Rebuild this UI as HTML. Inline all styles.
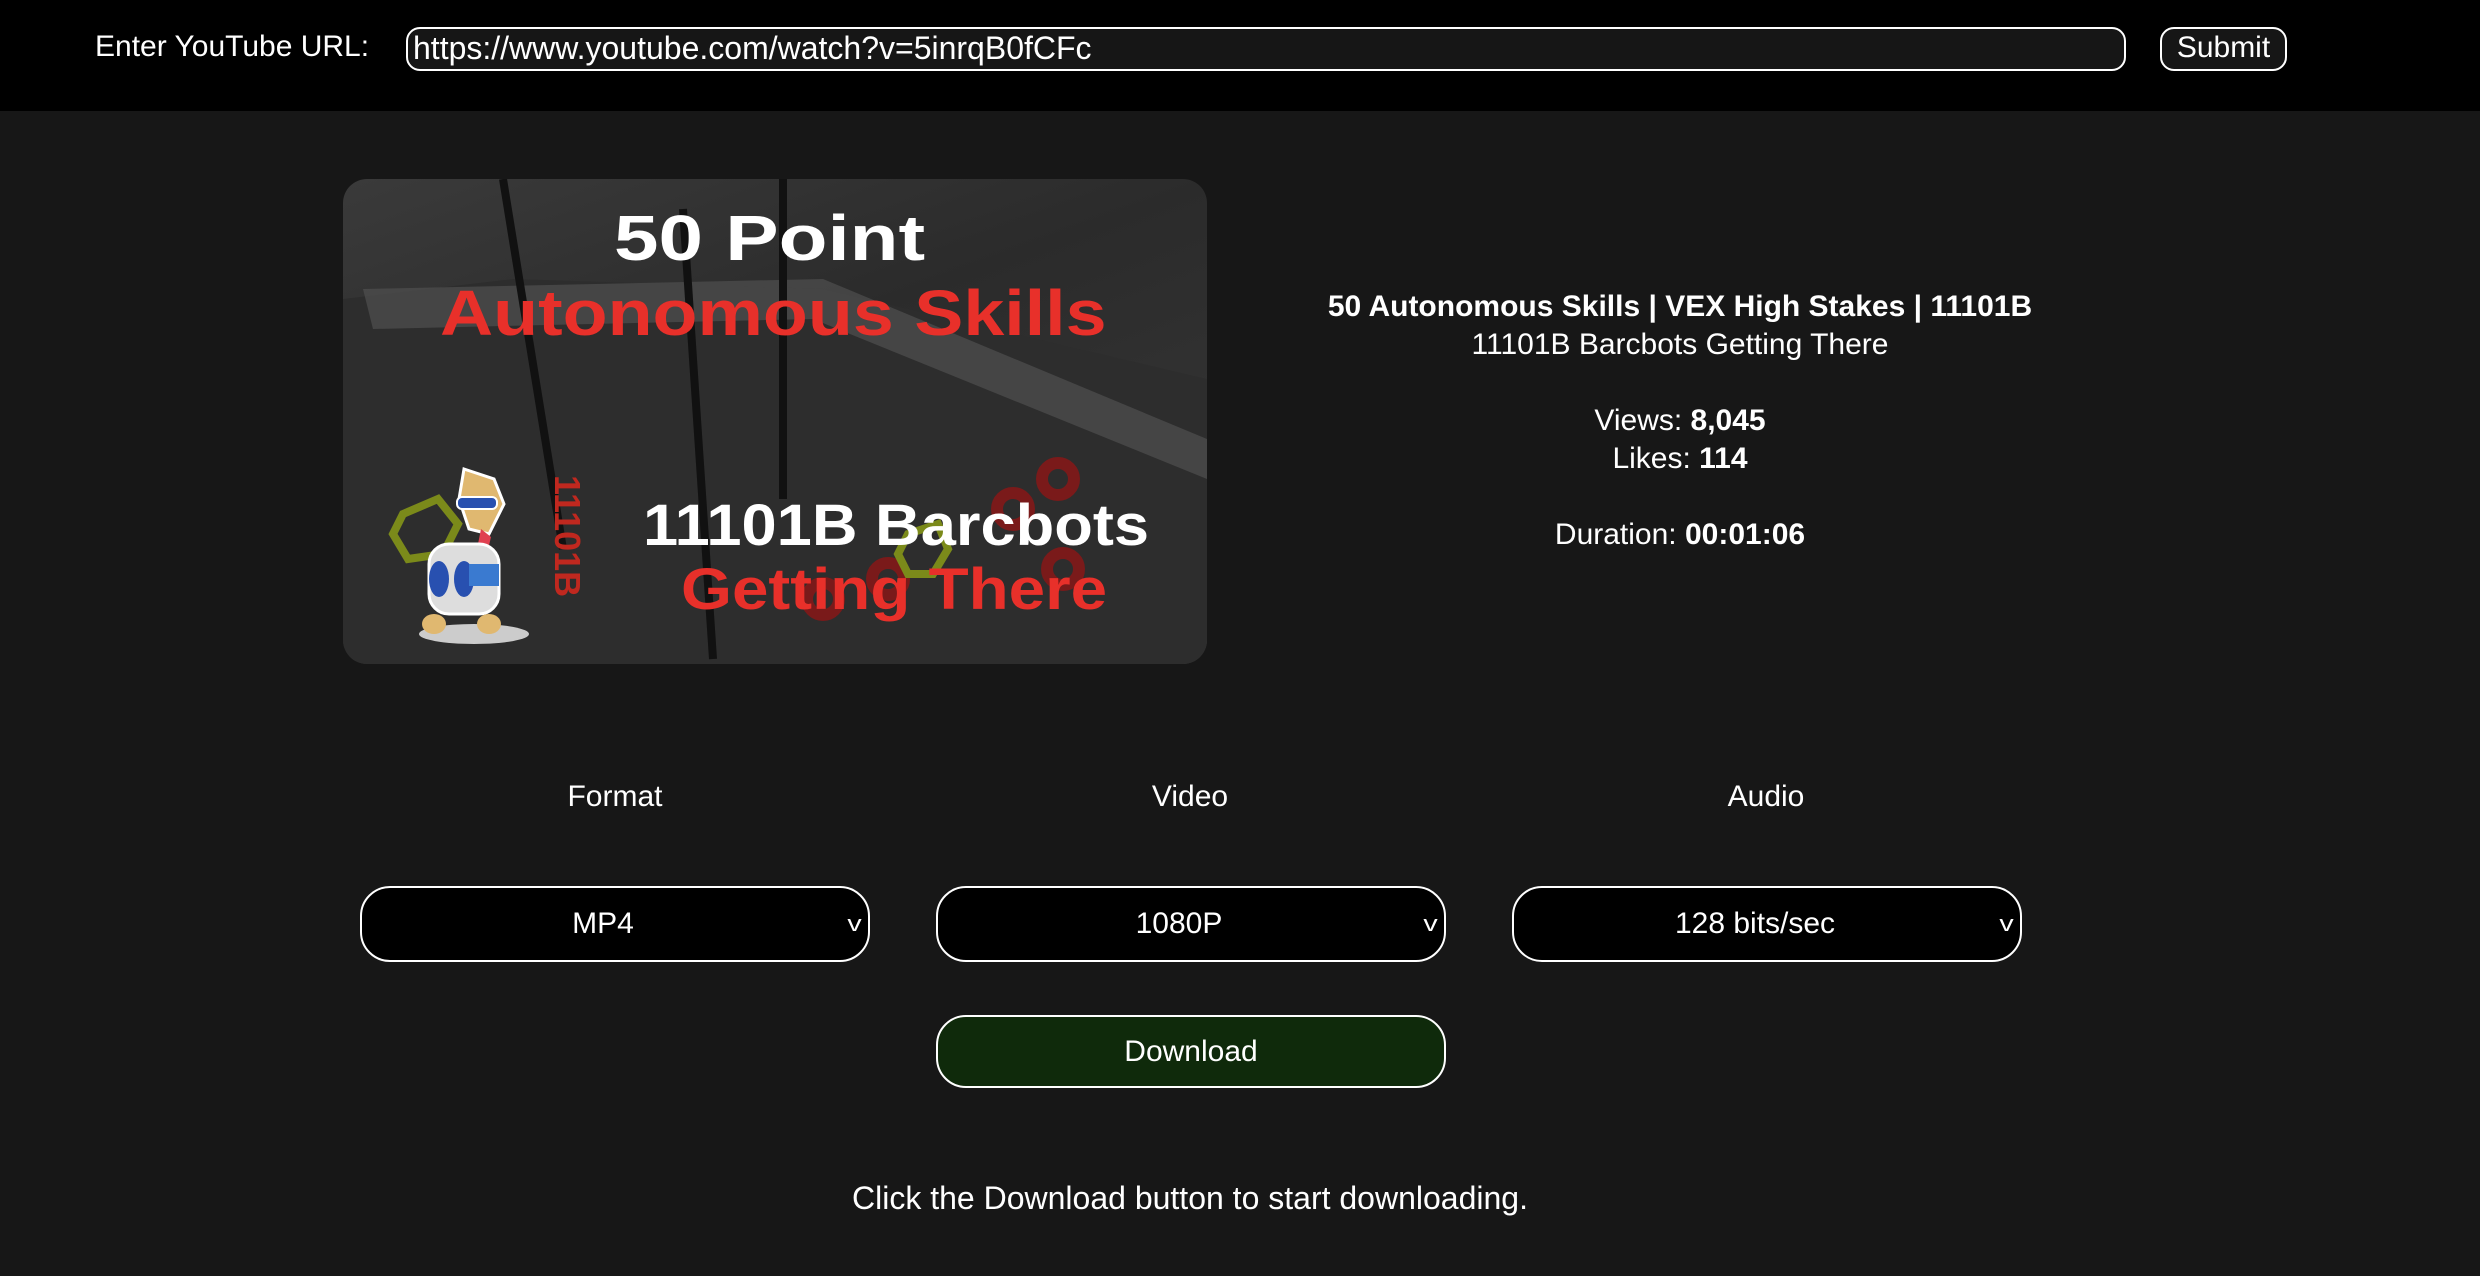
<!DOCTYPE html>
<html><head><meta charset="utf-8"><style>
*{margin:0;padding:0;box-sizing:border-box}
body{width:2480px;height:1276px;background:#171717;font-family:"Liberation Sans",sans-serif;color:#fff;position:relative;overflow:hidden}
.hdr{position:absolute;left:0;top:0;width:2480px;height:111px;background:#000}
.abs{position:absolute}
.lbl{left:95px;top:30px;font-size:30px;line-height:34px}
.inp{left:406px;top:27px;width:1720px;height:44px;border:2px solid #fff;border-radius:14px;background:#161616;font-size:32px;line-height:38px;padding-left:5px}
.sub{left:2160px;top:27px;width:127px;height:44px;border:2px solid #fff;border-radius:14px;background:#161616;font-size:30px;line-height:38px;text-align:center}
.thumb{left:343px;top:179px;width:864px;height:485px;border-radius:24px;overflow:hidden;background:linear-gradient(160deg,#3a3a3a 0%,#2b2b2b 40%,#323232 70%,#3d3d3d 100%)}
.t{position:absolute;font-weight:bold;white-space:nowrap;transform-origin:0 0}
.info{left:1180px;width:1000px;text-align:center;font-size:30px;line-height:38px}
.cl{top:780px;font-size:30px;width:300px;text-align:center}
.sel{top:886px;width:510px;height:76px;border:2px solid #fff;border-radius:30px;background:#000;font-size:30px;line-height:72px;text-align:center;padding-right:24px}
.sel span.c{position:absolute;right:8px;top:0;font-size:22px;transform:scaleX(1.3)}
.dl{left:936px;top:1015px;width:510px;height:73px;border:2px solid #fff;border-radius:30px;background:#0f2a0b;font-size:30px;line-height:69px;text-align:center}
</style></head><body>
<div class="hdr"></div>
<div class="abs lbl">Enter YouTube URL:</div>
<div class="abs inp">https://www.youtube.com/watch?v=5inrqB0fCFc</div>
<div class="abs sub">Submit</div>

<div class="abs thumb">
 <svg width="864" height="485" style="position:absolute;left:0;top:0">
  <polygon points="0,120 170,100 480,110 864,200 864,485 0,485" fill="#2d2d2d"/>
  <polygon points="20,110 480,100 864,260 864,300 470,140 30,150" fill="#555" opacity=".6"/>
  <line x1="340" y1="30" x2="370" y2="480" stroke="#111" stroke-width="8"/>
  <line x1="160" y1="0" x2="220" y2="370" stroke="#111" stroke-width="8"/>
  <line x1="440" y1="0" x2="440" y2="320" stroke="#111" stroke-width="8"/>
  <g fill="none" stroke="#7a1a1a" stroke-width="12">
   <circle cx="480" cy="420" r="16"/><circle cx="670" cy="330" r="16"/><circle cx="715" cy="300" r="16"/><circle cx="720" cy="390" r="16"/><circle cx="545" cy="400" r="16"/>
  </g>
  <g fill="none" stroke="#7b8a1a" stroke-width="8">
   <polygon points="60,335 95,320 115,345 100,375 65,380 50,355"/><polygon points="565,355 595,345 605,370 590,395 565,395 555,375"/>
  </g>
 </svg>
 <div class="t" style="left:271px;top:22px;font-size:64px;color:#fff;transform:scaleX(1.25)">50 Point</div>
 <div class="t" style="left:97px;top:97px;font-size:64px;color:#e8302a;transform:scaleX(1.15)">Autonomous Skills</div>
 <div class="t" style="left:300px;top:313px;font-size:58px;color:#fff;transform:scaleX(1.09)">11101B Barcbots</div>
 <div class="t" style="left:338px;top:377px;font-size:58px;color:#e8302a;transform:scaleX(1.13)">Getting There</div>
 <div class="t" style="font-size:36px;color:#c0281f;transform:rotate(90deg);left:245px;top:296px">11101B</div>
 <svg width="140" height="190" style="position:absolute;left:66px;top:280px">
  <ellipse cx="65" cy="175" rx="55" ry="10" fill="#ccc"/>
  <path d="M55 10 L85 20 L95 45 L80 75 L60 70 L50 40Z" fill="#e0b870" stroke="#fff" stroke-width="3"/>
  <rect x="48" y="38" width="40" height="12" rx="5" fill="#2850b0" stroke="#fff" stroke-width="2"/>
  <path d="M72 70 L82 78 L78 95 L68 90Z" fill="#e04050"/>
  <rect x="20" y="85" width="70" height="70" rx="20" fill="#ddd" stroke="#fff" stroke-width="3"/>
  <ellipse cx="30" cy="120" rx="10" ry="18" fill="#2850b0"/>
  <ellipse cx="55" cy="120" rx="10" ry="18" fill="#2850b0"/>
  <rect x="60" y="105" width="30" height="22" fill="#3a7ad0"/>
  <ellipse cx="25" cy="165" rx="12" ry="10" fill="#e0b870"/><ellipse cx="80" cy="165" rx="12" ry="10" fill="#e0b870"/>
 </svg>
</div>

<div class="abs info" style="top:288px;font-weight:bold">50 Autonomous Skills | VEX High Stakes | 11101B</div>
<div class="abs info" style="top:326px">11101B Barcbots Getting There</div>
<div class="abs info" style="top:402px">Views: <b>8,045</b></div>
<div class="abs info" style="top:440px">Likes: <b>114</b></div>
<div class="abs info" style="top:516px">Duration: <b>00:01:06</b></div>

<div class="abs cl" style="left:465px">Format</div>
<div class="abs cl" style="left:1040px">Video</div>
<div class="abs cl" style="left:1616px">Audio</div>

<div class="abs sel" style="left:360px">MP4<span class="c">v</span></div>
<div class="abs sel" style="left:936px">1080P<span class="c">v</span></div>
<div class="abs sel" style="left:1512px">128 bits/sec<span class="c">v</span></div>

<div class="abs dl">Download</div>
<div class="abs" style="left:690px;width:1000px;top:1180px;text-align:center;font-size:32px">Click the Download button to start downloading.</div>
</body></html>
